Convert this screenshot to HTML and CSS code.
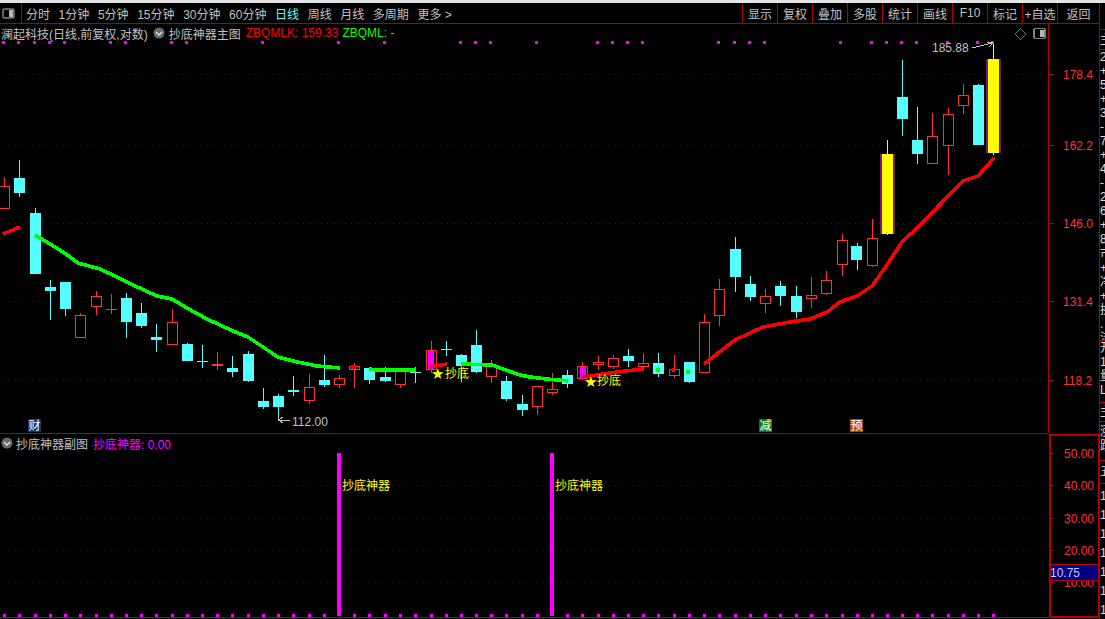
FILE: index.html
```html
<!DOCTYPE html>
<html lang="zh">
<head>
<meta charset="utf-8">
<title>澜起科技</title>
<link rel="stylesheet" href="styles.css">
</head>
<body>
<div class="strip"></div>
<div class="frame">
  <div class="left">
    <header class="toolbar">
      <div class="tb-icon">
        <svg class="panel-icon" width="13" height="11" viewBox="0 0 13 11"><rect class="pi-box" x="1" y="1" width="11" height="9" rx="1.5"/><rect class="pi-fill" x="7" y="2" width="4" height="7"/></svg>
      </div>
      <nav class="periods">
        <span>分时</span><span>1分钟</span><span>5分钟</span><span>15分钟</span><span>30分钟</span><span>60分钟</span><span class="on">日线</span><span>周线</span><span>月线</span><span>多周期</span><span>更多 &gt;</span>
      </nav>
      <nav class="actions">
        <span>显示</span><span>复权</span><span>叠加</span><span>多股</span><span>统计</span><span>画线</span><span>F10</span><span>标记</span><span>+自选</span><span class="back">返回</span>
      </nav>
    </header>

    <section class="main-pane">
      <div class="plot">
        <div class="legend">
          <span class="name">澜起科技(日线,前复权,对数)</span>
          <svg class="chev" width="12" height="12" viewBox="0 0 12 12"><circle class="chev-bg" cx="6" cy="6" r="5.5"/><path class="chev-mark" d="M3 5l3 3 3-3"/></svg>
          <span class="name">抄底神器主图</span>
          <span class="red gap">ZBQMLK: 159.33</span>
          <span class="green">ZBQML: -</span>
        </div>
        <svg class="canvas" width="1048" height="409" viewBox="0 24 1048 409">
          <path class="grid" d="M3 74.5H1045M3 145.5H1045M3 223.5H1045M3 301.5H1045M3 380.5H1045"/>
          <path class="dots" d="M2 41h3v3h-3zM17 41h3v3h-3zM33 41h3v3h-3zM48 41h3v3h-3zM63 41h3v3h-3zM109 41h3v3h-3zM124 41h3v3h-3zM170 41h3v3h-3zM185 41h3v3h-3zM261 41h3v3h-3zM337 41h3v3h-3zM383 41h3v3h-3zM459 41h3v3h-3zM474 41h3v3h-3zM489 41h3v3h-3zM535 41h3v3h-3zM596 41h3v3h-3zM611 41h3v3h-3zM626 41h3v3h-3zM641 41h3v3h-3zM717 41h3v3h-3zM733 41h3v3h-3zM748 41h3v3h-3zM763 41h3v3h-3zM839 41h3v3h-3zM870 41h3v3h-3zM885 41h3v3h-3zM900 41h3v3h-3zM915 41h3v3h-3zM946 41h3v3h-3zM976 41h3v3h-3zM991 41h3v3h-3z"/>

          <path class="wick-r" d="M4.5 177V209M80.5 313V338M96.5 291V315M111.5 294V314M106 309.5H117M172.5 309V345M217.5 352V370M212 364.5H223M212 365.5H223M309.5 374V404M339.5 375V388M354.5 363V388M400.5 370V388M431.5 341V373M491.5 360V383M537.5 386V415M552.5 373V395M582.5 362V380M598.5 356V370M613.5 355V369M643.5 353V370M674.5 355V378M704.5 314V373M719.5 279V326M765.5 289V313M811.5 277V308M826.5 271V295M842.5 234V276M872.5 219V267M932.5 113V164M948.5 108V175M963.5 84V114"/>
          <path class="body-r" d="M-.5 186.5h10v22h-10zM75.5 315.5h10v22h-10zM91.5 296.5h10v10h-10zM167.5 322.5h10v22h-10zM304.5 387.5h10v13h-10zM334.5 378.5h10v6h-10zM349.5 366.5h10v3h-10zM395.5 370.5h10v14h-10zM426.5 350.5h10v19h-10zM486.5 365.5h10v11h-10zM532.5 386.5h10v20h-10zM547.5 389.5h10v3h-10zM577.5 366.5h10v12h-10zM593.5 362.5h10v2h-10zM608.5 358.5h10v8h-10zM638.5 363.5h10v3h-10zM669.5 369.5h10v6h-10zM699.5 322.5h10v50h-10zM714.5 289.5h10v26h-10zM760.5 296.5h10v7h-10zM806.5 295.5h10v3h-10zM821.5 280.5h10v13h-10zM837.5 240.5h10v24h-10zM867.5 238.5h10v27h-10zM927.5 136.5h10v27h-10zM943.5 114.5h10v31h-10zM958.5 95.5h10v10h-10z"/>
          <path class="fill-m" d="M428 351h6v19h-6zM580 367h6v12h-6z"/>

          <path class="wick-c" d="M19.5 160V197M35.5 208V274M50.5 280V320M65.5 282V316M126.5 293V338M141.5 303V328M156.5 324V352M187.5 343V361M202.5 345V368M232.5 356V377M248.5 351V382M263.5 388V409M278.5 394V420M293.5 376V396M324.5 355V387M369.5 368V384M385.5 367V382M415.5 367V383M446.5 341V356M461.5 354V382M476.5 330V373M506.5 376V401M522.5 395V416M567.5 370V388M628.5 349V367M658.5 353V377M689.5 362V383M735.5 237V292M750.5 276V301M780.5 281V306M796.5 286V318M857.5 243V270M902.5 60V136M917.5 107V164M978.5 84V145"/>
          <path class="body-c" d="M14 178h11v15h-11zM30 213h11v61h-11zM45 287h11v4h-11zM60 282h11v27h-11zM121 298h11v24h-11zM136 313h11v13h-11zM151 337h11v3h-11zM182 344h11v17h-11zM197 361h11v1h-11zM227 368h11v4h-11zM243 354h11v27h-11zM258 401h11v6h-11zM273 396h11v11h-11zM288 390h11v2h-11zM319 380h11v5h-11zM364 368h11v12h-11zM380 377h11v4h-11zM410 372h11v1h-11zM441 349h11v1h-11zM456 355h11v11h-11zM471 345h11v27h-11zM501 381h11v18h-11zM517 404h11v6h-11zM562 375h11v9h-11zM623 356h11v5h-11zM653 363h11v11h-11zM684 362h11v20h-11zM730 249h11v28h-11zM745 284h11v13h-11zM775 286h11v10h-11zM791 296h11v16h-11zM851 246h11v14h-11zM897 97h11v22h-11zM912 140h11v14h-11zM973 85h11v60h-11z"/>

          <path class="wick-y" d="M887.5 140V235M993.5 44V155"/>
          <path class="fill-p" d="M880 154h15v80h-15zM986 59h15v94h-15z"/>
          <path class="fill-y" d="M882 154h11v80h-11zM988 59h11v94h-11z"/>

          <polyline class="line-r" points="3,234 20,227"/>
          <polyline class="line-g" points="35,235 40,238 50,244 60,250 70,257 78,263 100,269 117,277 133,285 157,296 172,299 187,308 207,319 233,331 248,337 263,347 278,357 293,361 317,366 340,368"/>
          <polyline class="line-g" points="369,369 378,370 416,370"/>
          <polyline class="line-r" points="430,367 447,364"/>
          <polyline class="line-g" points="461,364 492,365 503,369 520,375 530,377 547,379 568,381"/>
          <polyline class="line-r" points="582,377 597,375 617,372 643,369"/>
          <polyline class="line-r" points="351,367 356,367"/>
          <polyline class="line-g" points="656,370 660,370"/>
          <polyline class="line-r" points="672,370 675,370"/>
          <polyline class="line-g" points="686,372 690,372"/>
          <polyline class="line-r" points="704,364 735,340 763,327 790,322 810,319 827,312 840,302 857,296 872,286 887,265 902,242 918,227 963,181 978,176 994,158"/>

          <text class="t-y star" x="431" y="379">★</text>
          <text class="t-y" x="445" y="378">抄底</text>
          <text class="t-y star" x="584" y="387">★</text>
          <text class="t-y" x="597" y="385">抄底</text>

          <text class="t-g" x="932" y="52">185.88</text>
          <path class="arrow" d="M972 48L992 43M987 42L993 43L989 47"/>
          <path class="wick-g" d="M278.5 415V421M279 420H290M279 420L283 417M279 420L283 423"/>
          <text class="t-g" x="292" y="426">112.00</text>

          <path class="diamond" d="M1020.5 28.5L1026 34L1020.5 39.5L1015 34z"/>
          <rect class="pi-box" x="1034" y="28.5" width="11" height="10" rx="1.5"/>
          <rect class="pi-fill" x="1040" y="30" width="4" height="7"/>

          <rect class="b-blue" x="28" y="419" width="13" height="13"/>
          <text class="t-w" x="28.5" y="430">财</text>
          <rect class="b-green" x="759" y="419" width="13" height="13"/>
          <text class="t-w" x="759.5" y="430">减</text>
          <rect class="b-orange" x="850" y="419" width="13" height="13"/>
          <text class="t-w" x="850.5" y="430">预</text>
        </svg>
      </div>
      <svg class="axis-main" width="50" height="409" viewBox="1049 24 50 409">
        <path class="tick" d="M1049 74.5h5M1049 145.5h5M1049 223.5h5M1049 301.5h5M1049 380.5h5"/>
        <text class="t-r" x="1063" y="79">178.4</text>
        <text class="t-r" x="1063" y="150">162.2</text>
        <text class="t-r" x="1063" y="228">146.0</text>
        <text class="t-r" x="1063" y="306">131.4</text>
        <text class="t-r" x="1063" y="385">118.2</text>
      </svg>
    </section>

    <section class="sub-pane">
      <div class="plot-sub">
        <div class="legend">
          <svg class="chev chev-first" width="12" height="12" viewBox="0 0 12 12"><circle class="chev-bg" cx="6" cy="6" r="5.5"/><path class="chev-mark" d="M3 5l3 3 3-3"/></svg>
          <span class="name">抄底神器副图</span>
          <span class="magenta gap">抄底神器: 0.00</span>
        </div>
        <svg class="canvas" width="1049" height="183" viewBox="0 434 1049 183">
          <path class="grid" d="M3 485.5H1045M3 518.5H1045M3 550.5H1045M3 582.5H1045"/>
          <path class="dots" d="M3 614h3v3h-3zM18 614h3v3h-3zM34 614h3v3h-3zM49 614h3v3h-3zM64 614h3v3h-3zM79 614h3v3h-3zM95 614h3v3h-3zM110 614h3v3h-3zM125 614h3v3h-3zM140 614h3v3h-3zM155 614h3v3h-3zM171 614h3v3h-3zM186 614h3v3h-3zM201 614h3v3h-3zM216 614h3v3h-3zM231 614h3v3h-3zM247 614h3v3h-3zM262 614h3v3h-3zM277 614h3v3h-3zM292 614h3v3h-3zM308 614h3v3h-3zM323 614h3v3h-3zM353 614h3v3h-3zM368 614h3v3h-3zM384 614h3v3h-3zM399 614h3v3h-3zM414 614h3v3h-3zM430 614h3v3h-3zM445 614h3v3h-3zM460 614h3v3h-3zM475 614h3v3h-3zM490 614h3v3h-3zM505 614h3v3h-3zM521 614h3v3h-3zM536 614h3v3h-3zM566 614h3v3h-3zM581 614h3v3h-3zM597 614h3v3h-3zM612 614h3v3h-3zM627 614h3v3h-3zM642 614h3v3h-3zM657 614h3v3h-3zM673 614h3v3h-3zM688 614h3v3h-3zM703 614h3v3h-3zM718 614h3v3h-3zM734 614h3v3h-3zM749 614h3v3h-3zM764 614h3v3h-3zM779 614h3v3h-3zM795 614h3v3h-3zM810 614h3v3h-3zM825 614h3v3h-3zM841 614h3v3h-3zM856 614h3v3h-3zM871 614h3v3h-3zM886 614h3v3h-3zM901 614h3v3h-3zM916 614h3v3h-3zM931 614h3v3h-3zM947 614h3v3h-3zM962 614h3v3h-3zM977 614h3v3h-3zM992 614h3v3h-3z"/>
          <path class="bar" d="M337 453h4v163h-4zM550 453h4v163h-4z"/>
          <text class="t-y" x="342" y="490">抄底神器</text>
          <text class="t-y" x="555" y="490">抄底神器</text>
        </svg>
      </div>
      <svg class="axis-sub" width="47" height="180" viewBox="1051 436 47 180">
        <path class="tick" d="M1051 453.5h3M1051 485.5h3M1051 518.5h3M1051 550.5h3M1051 582.5h3M1051 469.5h1M1051 503.5h1M1051 534.5h1"/>
        <text class="t-r" x="1064" y="458">50.00</text>
        <text class="t-r" x="1064" y="490">40.00</text>
        <text class="t-r" x="1064" y="523">30.00</text>
        <text class="t-r" x="1064" y="555">20.00</text>
        <text class="t-r" x="1064" y="587">10.00</text>
        <rect class="price-tag" x="1050" y="564.5" width="49" height="16"/>
        <text class="t-tag" x="1050" y="577">10.75</text>
      </svg>
    </section>
  </div>

  <aside class="side">
    <div class="sec s0"></div>
    <div class="sec s1"><p>主力</p></div>
    <div class="sec s2"><p>2</p><p>+</p><p>5</p><p>+</p><p>3</p><p>-</p><p>7</p><p>+</p><p>4</p><p>-</p><p>2</p><p>6</p><p>+</p><p>8</p></div>
    <div class="sec s3"><p>市</p><p>+</p><p>净</p><p>+</p><p>换</p><p>.</p><p>流</p></div>
    <div class="sec s4"><p>开</p><p>1</p><p>量</p><p>L</p></div>
    <div class="sec s5"><p>主</p></div>
    <div class="sec s6"><p>涨</p><p>跌</p></div>
    <div class="sec s7"><p>五</p></div>
    <div class="sec s8"><p>1</p><p>1</p><p>1</p><p>1</p><p>1</p><p>1</p><p>1</p></div>
  </aside>
</div>
</body>
</html>
```

FILE: styles.css
```css
* { box-sizing: border-box; }

html, body {
  margin: 0;
  height: 100%;
  background: #000;
  overflow: hidden;
}

body {
  font-family: "Liberation Sans", "Noto Sans CJK SC", sans-serif;
  font-size: 12px;
  color: #c0c0c0;
}

svg { display: block; }

.strip { height: 3px; background: #e4e4e4; }

.frame { display: flex; height: 616px; }
.left { width: 1099px; flex: none; }

.toolbar {
  display: flex;
  height: 21px;
  border-bottom: 1px solid #b00000;
}

.tb-icon {
  display: flex;
  align-items: center;
  width: 22px;
  padding-left: 2px;
  border-right: 1px solid #b00000;
}

.pi-box { fill: none; stroke: #808080; stroke-width: 1.5; }
.pi-fill { fill: #b8b8b8; }

.periods {
  display: flex;
  align-items: center;
  gap: 8.6px;
  padding-left: 4px;
}
.periods .on { color: #66ffff; }

.actions { display: flex; margin-left: auto; }
.actions span {
  display: flex;
  align-items: center;
  justify-content: center;
  width: 35px;
  white-space: nowrap;
  border-left: 1px solid #b00000;
}
.actions .back { width: 42px; }

.main-pane { display: flex; height: 410px; }
.plot {
  position: relative;
  width: 1048px;
  border-bottom: 1px solid #b00000;
}
.axis-main {
  margin-left: 1px;
  box-shadow: -1px 0 0 #b00000;
}

.legend {
  display: flex;
  align-items: center;
  height: 18px;
  padding-left: 1px;
  white-space: nowrap;
}
.chev { margin: 0 4px 0 5px; flex: none; }
.chev-first { margin: 0 3px 0 0; }
.chev-bg { fill: #6a6a6a; }
.chev-mark { fill: none; stroke: #e0e0e0; stroke-width: 1.5; }
.red { color: #ff0000; }
.green { color: #00ff00; margin-left: 4px; }
.magenta { color: #ff00ff; }
.gap { margin-left: 5px; }

.canvas { position: absolute; left: 0; top: 0; shape-rendering: crispEdges; }

.grid { stroke: #8a0000; stroke-width: 1; stroke-dasharray: 1 5; fill: none; }
.dots { fill: #ff00ff; }
.bar { fill: #ff00ff; }
.wick-r { stroke: #ff3232; fill: none; }
.body-r { stroke: #ff3232; fill: #000; }
.fill-m { fill: #ff00ff; }
.wick-c { stroke: #55ffff; fill: none; }
.body-c { fill: #55ffff; }
.wick-y { stroke: #ffff00; fill: none; }
.fill-p { fill: #701a80; }
.fill-y { fill: #ffff00; }
.line-r, .line-g { fill: none; stroke-width: 3.6; }
.line-r { stroke: #ff0000; }
.line-g { stroke: #00ff00; }
.arrow { fill: none; stroke: #c0c0c0; }
.wick-g { fill: none; stroke: #c0c0c0; }
.diamond { fill: none; stroke: #707070; }

.canvas text, .axis-main text, .axis-sub text {
  font-family: "Liberation Sans", "Noto Sans CJK SC", sans-serif;
  font-size: 12px;
}
.t-y { fill: #ffff00; }
.canvas .star { font-family: "DejaVu Sans", sans-serif; font-size: 15px; }
.t-g { fill: #c0c0c0; }
.t-w { fill: #ffffff; }
.t-r { fill: #ff3232; }
.t-tag { fill: #c8c8ff; }
.b-blue { fill: #0a3a70; }
.b-green { fill: #067a06; }
.b-orange { fill: #b84a00; }
.tick { stroke: #b00000; fill: none; shape-rendering: crispEdges; }
.price-tag { fill: #000080; stroke: #b00000; shape-rendering: crispEdges; }

.sub-pane {
  display: flex;
  height: 184px;
  border-bottom: 1px solid #b00000;
}
.plot-sub { position: relative; width: 1049px; }
.axis-sub {
  width: 50px;
  height: 183px;
  border: 2px solid #b00000;
  border-right-width: 1px;
  border-bottom-width: 1px;
}

.side {
  flex: 1;
  min-width: 0;
  overflow: hidden;
  padding-top: 21px;
  border-left: 1px solid #b00000;
  color: #dcdcdc;
  font-size: 12px;
}
.sec { overflow: hidden; border-bottom: 1px solid #b00000; }
.sec p { margin: 0; line-height: 14px; white-space: nowrap; }
.s0 { height: 6px; }
.s1 { height: 20px; padding-top: 3px; }
.s2 { height: 194px; }
.s3 { height: 97px; padding-top: 3px; }
.s4 { height: 62px; }
.s5 { height: 19px; padding-top: 2px; }
.s6 { height: 39px; padding-top: 3px; }
.s7 { height: 23px; padding-top: 4px; }
.s8 { border-bottom: 0; padding-top: 3px; }
.s8 p { line-height: 19px; }
```
